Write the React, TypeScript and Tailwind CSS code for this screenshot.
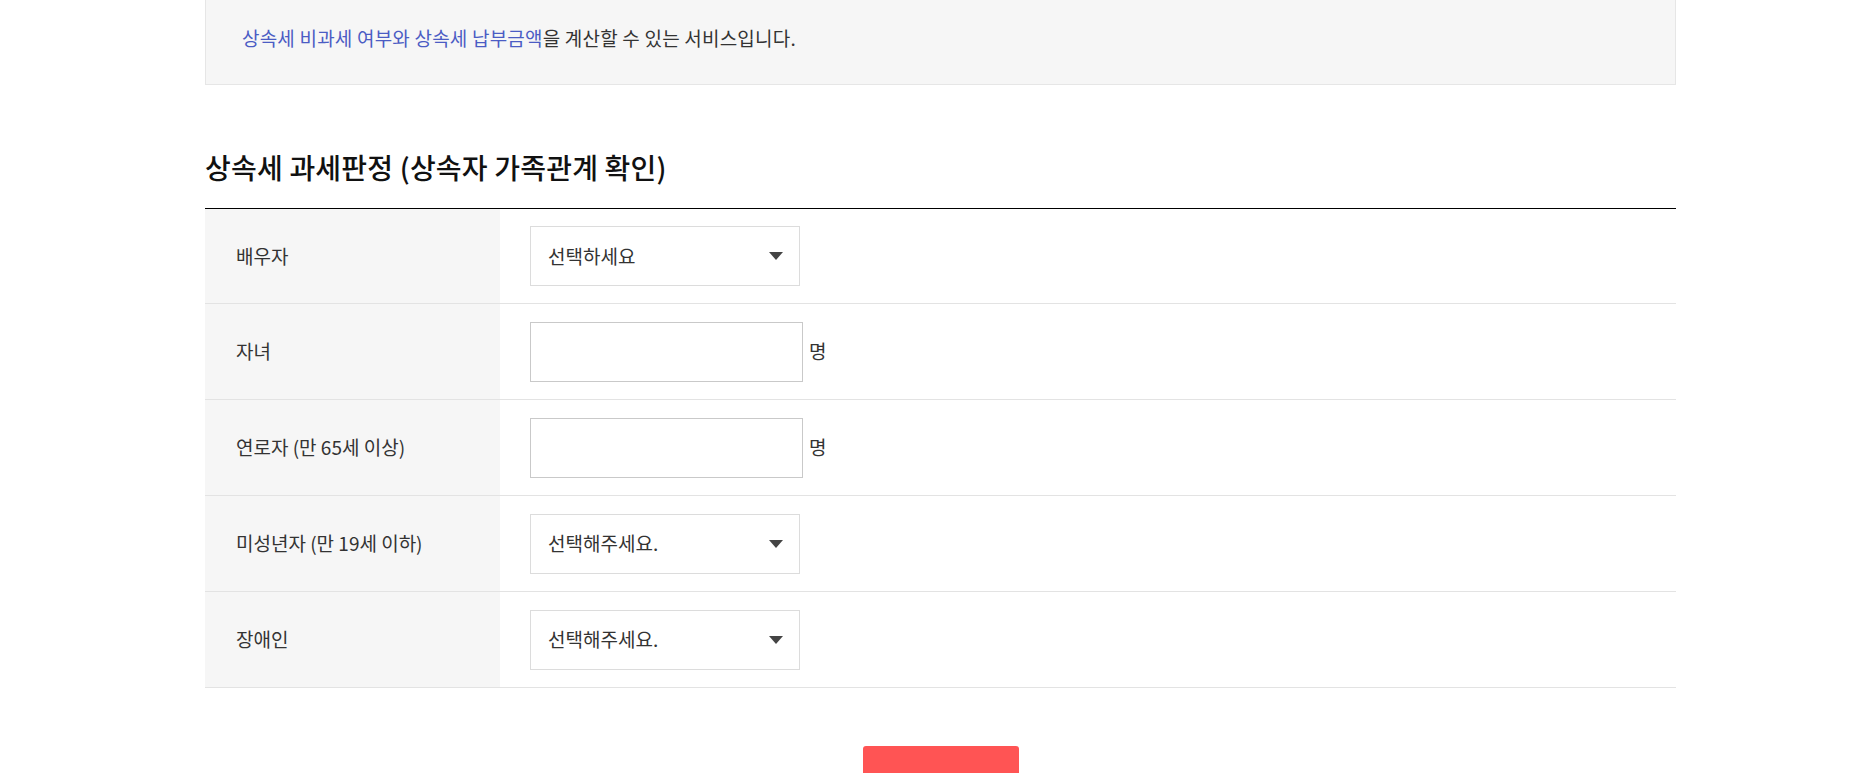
import React from 'react';

type Row = {
  label: string;
  kind: 'select' | 'count';
  placeholder?: string;
};

const rows: Row[] = [
  { label: '배우자', kind: 'select', placeholder: '선택하세요' },
  { label: '자녀', kind: 'count' },
  { label: '연로자 (만 65세 이상)', kind: 'count' },
  { label: '미성년자 (만 19세 이하)', kind: 'select', placeholder: '선택해주세요.' },
  { label: '장애인', kind: 'select', placeholder: '선택해주세요.' },
];

function SelectBox({ text }: { text: string }) {
  return (
    <div className="w-[270px] h-[60px] border border-[#dcdcdc] bg-white flex items-center justify-between pl-[17px] pr-[16px] cursor-pointer">
      <span className="text-[19px] text-[#333]">{text}</span>
      {/* caret */}
      <svg width="14" height="8" viewBox="0 0 14 8" className="text-[#444]">
        <path d="M0 0h14L7 8z" fill="currentColor" />
      </svg>
    </div>
  );
}

function CountInput() {
  return (
    <div className="flex items-center">
      <input
        type="text"
        className="w-[273px] h-[60px] border border-[#c9c9c9] bg-white outline-none px-3 text-[19px]"
      />
      <span className="ml-[6px] text-[19px] text-[#333]">명</span>
    </div>
  );
}

export default function App() {
  return (
    <div className="min-h-screen bg-white font-['Noto_Sans_CJK_KR','Noto_Sans',sans-serif]">
      <div className="ml-[205px] w-[1471px]">
        {/* intro box */}
        <div className="h-[85px] border border-t-0 border-[#e6e6e6] bg-[#f6f6f6] flex items-center pl-[36px] pb-[8px]">
          <p className="text-[19px] text-[#333] tracking-[0.2px]">
            <span className="text-[#4b5cc4]">상속세 비과세 여부와 상속세 납부금액</span>을 계산할 수 있는 서비스입니다.
          </p>
        </div>

        <h2 className="mt-[63px] mb-[22px] text-[28px] leading-[38px] font-medium text-[#111] tracking-[0.2px]">
          상속세 과세판정 (상속자 가족관계 확인)
        </h2>

        {/* form table */}
        <div className="border-t border-black">
          {rows.map((row, i) => (
            <div
              key={row.label}
              className={`grid grid-cols-[295px_1fr] border-b border-[#e3e3e3] ${i === 0 ? 'h-[95px]' : 'h-[96px]'}`}
            >
              <div className="bg-[#f6f6f6] flex items-center pl-[31px] text-[19px] text-[#333]">
                {row.label}
              </div>
              <div className="flex items-center pl-[30px]">
                {row.kind === 'select' ? <SelectBox text={row.placeholder ?? ''} /> : <CountInput />}
              </div>
            </div>
          ))}
        </div>

        <div className="flex justify-center mt-[58px] pb-10">
          <button className="w-[156px] h-[72px] rounded-[3px] bg-[#ff5454] text-white text-[18px] font-medium pt-[30px]">
            계산하기
          </button>
        </div>
      </div>
    </div>
  );
}
